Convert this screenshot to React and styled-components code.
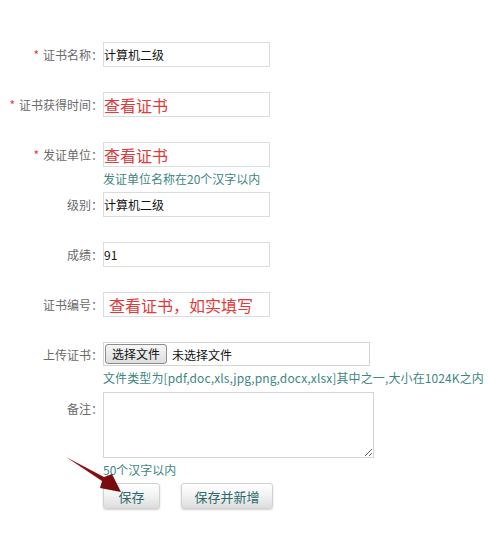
import React from "react";
import styled, { createGlobalStyle } from "styled-components";

const Global = createGlobalStyle`
  html, body { margin: 0; padding: 0; background: #fff; }
  body { font-family: "Noto Sans CJK SC", "Microsoft YaHei", sans-serif; }
  * { box-sizing: border-box; }
`;

const Form = styled.div`
  position: relative;
  width: 491px;
  height: 537px;
  padding-top: 42px;
`;

const Row = styled.div`
  display: flex;
  align-items: flex-start;
  height: ${(p) => p.$h || 50}px;
`;

const Label = styled.div`
  flex: none;
  width: 103px;
  text-align: right;
  font-size: 12px;
  line-height: 25px;
  color: #6a6a6a;
  white-space: nowrap;
  padding-top: ${(p) => p.$top || 0}px;
`;

const Star = styled.span`
  color: #e0413f;
  margin-right: 4px;
`;

const Field = styled.div`
  display: flex;
  flex-direction: column;
  align-items: flex-start;
`;

const TextInput = styled.input`
  width: 167px;
  height: 25px;
  border: 1px solid #dcdcdc;
  padding: 0 0 0 ${(p) => p.$pad || 0}px;
  margin: 0;
  font-family: "Noto Sans CJK SC", sans-serif;
  font-size: ${(p) => p.$size || 12}px;
  color: ${(p) => p.$color || "#111"};
  outline: none;
  background: #fff;
`;

const Hint = styled.div`
  margin-top: 4px;
  font-size: 12px;
  line-height: 16px;
  color: #3d8781;
  white-space: nowrap;
  letter-spacing: ${(p) => p.$ls || 0}px;
`;

const FileBox = styled.div`
  display: flex;
  align-items: center;
  width: 267px;
  height: 24px;
  border: 1px solid #d4d4d4;
  padding-left: 1px;
  gap: 5px;
`;

const FileButton = styled.button`
  height: 20px;
  padding: 0 6px;
  margin: 0;
  border: 1px solid #8c8c8c;
  border-radius: 3px;
  background: linear-gradient(#f6f6f6, #dedede);
  font-family: "Noto Sans CJK SC", sans-serif;
  font-size: 12px;
  line-height: 18px;
  color: #111;
`;

const FileName = styled.span`
  font-size: 12px;
  color: #111;
`;

const Area = styled.textarea`
  width: 271px;
  height: 66px;
  margin: 0;
  border: 1px solid #d4d4d4;
  font-family: "Noto Sans CJK SC", sans-serif;
  font-size: 12px;
  outline: none;
`;

const Actions = styled.div`
  display: flex;
  gap: 21px;
  padding-left: 103px;
`;

const Btn = styled.button`
  width: ${(p) => p.$w}px;
  height: 26px;
  margin: 0;
  padding: 0;
  border: 1px solid #d2d2d2;
  border-radius: 3px;
  background: linear-gradient(#ffffff 0%, #f3f3f3 45%, #dcdcdc 100%);
  box-shadow: 0 1px 2px rgba(0, 0, 0, 0.18);
  font-family: "Noto Sans CJK SC", sans-serif;
  font-size: 13px;
  color: #2c6a6a;
`;

const Arrow = styled.svg`
  position: absolute;
  left: 0;
  top: 0;
  pointer-events: none;
`;

export default function App() {
  return (
    <>
      <Global />
      <Form>
        <Row>
          <Label><Star>*</Star>证书名称：</Label>
          <Field><TextInput readOnly defaultValue="计算机二级" /></Field>
        </Row>
        <Row>
          <Label><Star>*</Star>证书获得时间：</Label>
          <Field><TextInput readOnly defaultValue="查看证书" $size={16} $color="#e03a3a" /></Field>
        </Row>
        <Row>
          <Label><Star>*</Star>发证单位：</Label>
          <Field>
            <TextInput readOnly defaultValue="查看证书" $size={16} $color="#e03a3a" />
            <Hint>发证单位名称在20个汉字以内</Hint>
          </Field>
        </Row>
        <Row>
          <Label>级别：</Label>
          <Field><TextInput readOnly defaultValue="计算机二级" /></Field>
        </Row>
        <Row>
          <Label>成绩：</Label>
          <Field><TextInput readOnly defaultValue="91" /></Field>
        </Row>
        <Row>
          <Label>证书编号：</Label>
          <Field><TextInput readOnly defaultValue="查看证书，如实填写" $size={16} $color="#e03a3a" $pad={5} /></Field>
        </Row>
        <Row>
          <Label>上传证书：</Label>
          <Field>
            <FileBox>
              <FileButton type="button">选择文件</FileButton>
              <FileName>未选择文件</FileName>
            </FileBox>
            <Hint $ls={0.12}>文件类型为[pdf,doc,xls,jpg,png,docx,xlsx]其中之一,大小在1024K之内</Hint>
          </Field>
        </Row>
        <Row $h={91}>
          <Label $top={4}>备注：</Label>
          <Field>
            <Area />
            <Hint>50个汉字以内</Hint>
          </Field>
        </Row>
        <Actions>
          <Btn type="button" $w={57}>保存</Btn>
          <Btn type="button" $w={92}>保存并新增</Btn>
        </Actions>
        <Arrow width="491" height="537" viewBox="0 0 491 537">
          <defs>
            <linearGradient id="ag" x1="0" y1="0" x2="1" y2="1">
              <stop offset="0" stopColor="#9a1418" />
              <stop offset="1" stopColor="#6e0a0d" />
            </linearGradient>
          </defs>
          <polygon
            points="66,457 104,477 112,474 121,492 100,488 102,481"
            fill="url(#ag)"
          />
        </Arrow>
      </Form>
    </>
  );
}
